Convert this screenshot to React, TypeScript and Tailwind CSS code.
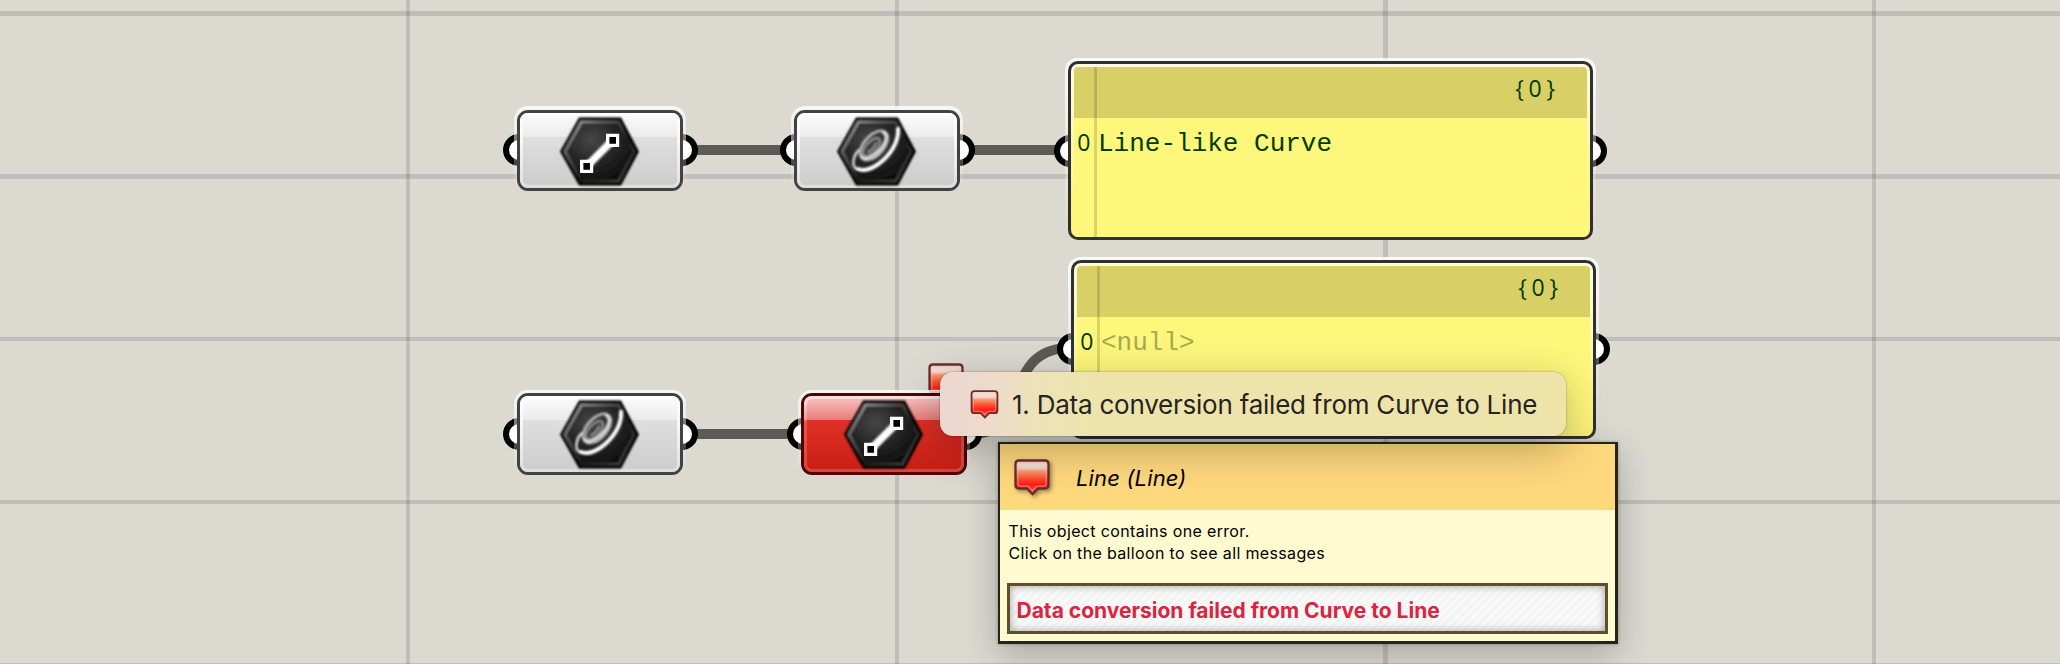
import type { ReactNode } from "react";

const VERTICAL_LINES = [
  "left-[406px] w-[4px]",
  "left-[895px] w-[4px]",
  "left-[1383px] w-[5px]",
  "left-[1872px] w-[4px]",
];
const HORIZONTAL_LINES = [
  "top-[11px] h-[5px]",
  "top-[174px] h-[5px]",
  "top-[337px] h-[4px]",
  "top-[500px] h-[4px]",
  "top-[663px] h-[1px]",
];

function HexBase({ id, children }: { id: string; children: ReactNode }) {
  return (
    <svg viewBox="0 0 79 69" className="h-[69px] w-[79px] overflow-visible">
      <defs>
        <radialGradient id={`${id}-face`} cx="0.38" cy="0.3" r="0.75">
          <stop offset="0" stopColor="#474747" />
          <stop offset="0.5" stopColor="#262626" />
          <stop offset="1" stopColor="#0d0d0d" />
        </radialGradient>
        <linearGradient id={`${id}-rim`} x1="0" y1="0" x2="1" y2="1">
          <stop offset="0" stopColor="#b4b4b4" />
          <stop offset="0.3" stopColor="#5c5c5c" />
          <stop offset="0.6" stopColor="#1c1c1c" />
          <stop offset="1" stopColor="#4a4a4a" />
        </linearGradient>
        <filter id={`${id}-soft`} x="-10%" y="-10%" width="120%" height="120%">
          <feGaussianBlur stdDeviation="0.85" />
        </filter>
      </defs>
      <g filter={`url(#${id}-soft)`}>
        <path d="M0 34.5 L19 0.5 H61 L79 34.5 L61 68.5 H19 Z" fill="#050505" />
        <path
          d="M5 34.5 L21.5 5 H58.5 L74 34.5 L58.5 64 H21.5 Z"
          fill={`url(#${id}-face)`}
          stroke={`url(#${id}-rim)`}
          strokeWidth="2.6"
        />
      </g>
      {children}
    </svg>
  );
}

function LineIcon({ id }: { id: string }) {
  return (
    <HexBase id={id}>
      <path d="M28 48 L52 24" stroke="#fff" strokeWidth="7.5" filter={`url(#${id}-soft)`} />
      <path d="M46 16.7h13.2v13.2H46zM20 42.7h13.2v13.2H20z" fill="#fff" />
      <path d="M49.4 20.1h6.6v6.6h-6.6zM23.4 46.1h6.6v6.6h-6.6z" fill="#000" />
    </HexBase>
  );
}

function CurveIcon({ id }: { id: string }) {
  return (
    <HexBase id={id}>
      <g fill="none" filter={`url(#${id}-soft)`} strokeLinecap="round">
        <path d="M61 11 C63 24 54 39 40 48.5 C30 55 18 55 16.5 47.5 C15.8 42 18 37 22 33" stroke="#d8d8d8" strokeWidth="2.6" />
        <path d="M61 12 C62 25 53 39 40 48 C33 52.5 26 54 21 52" stroke="#ffffff" strokeWidth="4" />
        <ellipse cx="37" cy="28.5" rx="17.5" ry="10" transform="rotate(-48 37 28.5)" stroke="#bcbcbc" strokeWidth="2.5" />
        <path d="M46 15.5 C52 18 48 30 37 38 C31 42 26 42.5 24.5 39" stroke="#e4e4e4" strokeWidth="2.5" />
        <ellipse cx="34.5" cy="30" rx="11" ry="5.3" transform="rotate(-47 34.5 30)" stroke="#959595" strokeWidth="2.2" />
        <path d="M31 35 C35 33 38 29 39 26" stroke="#a0a0a0" strokeWidth="2" />
      </g>
    </HexBase>
  );
}

function Balloon({ id, className }: { id: string; className: string }) {
  return (
    <svg viewBox="0 0 36 37" className={className}>
      <defs>
        <linearGradient id={id} x1="0" y1="0" x2="0" y2="1">
          <stop offset="0" stopColor="#efe3dc" />
          <stop offset="0.22" stopColor="#f6d9cc" />
          <stop offset="0.32" stopColor="#f79a72" />
          <stop offset="0.5" stopColor="#fb5a34" />
          <stop offset="0.72" stopColor="#ff1b16" />
          <stop offset="1" stopColor="#ff6a5c" />
        </linearGradient>
      </defs>
      <path
        d="M5 1.5 H31 Q34.5 1.5 34.5 5 V26 Q34.5 29.5 31 29.5 H24 L18.5 35 L13 29.5 H5 Q1.5 29.5 1.5 26 V5 Q1.5 1.5 5 1.5 Z"
        fill={`url(#${id})`}
        stroke="#6a2c2c"
        strokeWidth="2.3"
      />
      <path
        d="M6 3.8 H30 Q32.2 3.8 32.2 6 V25 Q32.2 27.2 30 27.2 H23 L18.5 31.5 L14 27.2 H6 Q3.8 27.2 3.8 25 V6 Q3.8 3.8 6 3.8 Z"
        fill="none"
        stroke="#ffb9a8"
        strokeOpacity="0.4"
        strokeWidth="1.6"
      />
    </svg>
  );
}

function Grips({ top }: { top: string }) {
  return (
    <>
      <span className={`absolute -left-[14.5px] ${top} size-8 rounded-full border-[6.5px] border-black bg-white`} />
      <span className={`absolute -right-[14.5px] ${top} size-8 rounded-full border-[6.5px] border-black bg-white`} />
    </>
  );
}

function Component({ place, error = false, children }: { place: string; error?: boolean; children: ReactNode }) {
  const frame = error
    ? "border-[#500500] bg-[linear-gradient(180deg,#fbdede_0%,#e8837e_32%,#dc2e24_32.5%,#da2a20_55%,#c92017_100%)]"
    : "border-[#424242] bg-[linear-gradient(180deg,#ffffff_0%,#ececec_32%,#dfdfdf_32.5%,#cccccc_100%)]";
  const glow = error
    ? "bg-[linear-gradient(180deg,#fde5e5_0%,#ee9a98_31%,#e8554e_33%,#d9443b_100%)]"
    : "bg-[linear-gradient(180deg,#ffffff_0%,#f7f7f7_40%,#dedede_100%)]";
  const face = error
    ? "bg-[linear-gradient(180deg,#f7bcbc_0%,#e67d78_30%,#dc3026_30.5%,#d82a20_55%,#c91f16_100%)]"
    : "bg-[linear-gradient(180deg,#fafafa_0%,#ebebeb_30%,#dfdfdf_30.5%,#cdcdcd_100%)]";
  return (
    <div className={`absolute ${place} h-[81.5px] w-[166px]`}>
      <Grips top="top-[24.5px]" />
      <span className="absolute -inset-x-[3px] -top-[3.5px] bottom-0 rounded-[14px] bg-[linear-gradient(180deg,#ffffffd0_0%,#ffffffa8_10%,#ffffff60_55%,#ffffff00_100%)]" />
      <div className={`relative h-full w-full rounded-[11px] border-[3px] ${frame}`}>
        <div className={`h-full w-full rounded-[8px] p-[3px] ${glow}`}>
          <div className={`flex h-full w-full items-center justify-center rounded-[5px] ${face}`}>
            <div className="-ml-[2px] mt-[2px]">{children}</div>
          </div>
        </div>
      </div>
    </div>
  );
}

function Glyph({ children }: { children: string }) {
  return (
    <span className="inline-block w-[15.6px] text-center font-['Open_Sans',sans-serif] text-[23px] font-normal">
      {children}
    </span>
  );
}

function Panel({ place, value, muted = false }: { place: string; value: string; muted?: boolean }) {
  return (
    <div className={`absolute ${place} h-[179px] w-[524.5px] font-['Liberation_Mono',monospace] text-[26px] text-[#003b00]`}>
      <Grips top="top-[73.5px]" />
      <span className="absolute -inset-x-[3px] -top-[3px] bottom-0 rounded-[12px] bg-[linear-gradient(180deg,#ffffffd8_0%,#ffffffa8_25%,#ffffff60_50%,#ffffff00_100%)]" />
      <div className="relative flex h-full w-full flex-col overflow-hidden rounded-[10px] border-[3px] border-[#303030] bg-[linear-gradient(180deg,#fffbe0_0%,#fffac0_30%,#fff67c_80%)] px-[3px] pt-[3px]">
        <div className="flex h-[51px] shrink-0 justify-end rounded-t-[4px] bg-[#d8d066] pr-[28px] leading-[43px]">
          <Glyph>{"{"}</Glyph>
          <Glyph>0</Glyph>
          <Glyph>{"}"}</Glyph>
        </div>
        <div className="flex grow bg-[#fff67c] pt-[10px] leading-[32px]">
          <span className="-mt-[2px] w-[22px] pl-[2px]"><Glyph>0</Glyph></span>
          <span className={muted ? "pl-[2px] text-[#a3ac52]" : "pl-[2px]"}>{value}</span>
        </div>
        <span className="absolute bottom-0 left-[23px] top-[3px] w-[3px] bg-[#000000]/14" />
      </div>
    </div>
  );
}

export default function App() {
  return (
    <main className="relative h-[664px] w-[2060px] overflow-hidden bg-[#dcd9d1]">
      {VERTICAL_LINES.map((line) => (
        <span key={line} className={`absolute inset-y-0 ${line} bg-black/12`} />
      ))}
      {HORIZONTAL_LINES.map((line) => (
        <span key={line} className={`absolute inset-x-0 ${line} bg-black/12`} />
      ))}

      <svg viewBox="0 0 2060 664" className="absolute inset-0 h-[664px] w-[2060px]" fill="none" stroke="#5b5a57" strokeWidth="10">
        <path d="M690 150 H785" />
        <path d="M968 150 H1060" />
        <path d="M690 434 H793" />
        <path d="M975 434 C1030 430 1002 352 1066 348" />
      </svg>

      <Component place="left-[517px] top-[109.5px]"><LineIcon id="line-a" /></Component>
      <Component place="left-[794px] top-[109.5px]"><CurveIcon id="curve-a" /></Component>
      <Component place="left-[517px] top-[393px]"><CurveIcon id="curve-b" /></Component>
      <Balloon id="balloon-node" className="absolute left-[928px] top-[363px] h-[37px] w-[36px]" />
      <Component place="left-[801px] top-[393px]" error><LineIcon id="line-b" /></Component>

      <Panel place="left-[1068px] top-[61px]" value="Line-like Curve" />
      <Panel place="left-[1071px] top-[259.5px]" value="<null>" muted />

      <section className="absolute left-[998px] top-[442px] flex h-[202px] w-[620px] flex-col border-2 border-r-[3px] border-b-[3px] border-[#26251c] bg-[#fffbd0] font-[Inter,sans-serif] text-black shadow-[0_10px_34px_rgba(0,0,0,0.24),0_0_3px_rgba(0,0,0,0.3)]">
        <header className="flex h-[66px] shrink-0 items-center bg-[#fed87d] pl-[14px]">
          <Balloon id="balloon-tip" className="h-[37px] w-[36px] drop-shadow-[2px_2px_2px_rgba(0,0,0,0.4)]" />
          <h1 className="ml-[26px] mt-[3px] text-[22px] italic tracking-[0.15px]">Line (Line)</h1>
        </header>
        <p className="pl-[8.5px] pt-[10px] text-[16px] leading-[22px] tracking-[0.35px]">
          This object contains one error.
          <br />
          Click on the balloon to see all messages
        </p>
        <div className="ml-[7px] mt-[19px] flex h-[51px] w-[601px] items-center border-[3px] border-[#5f5027] bg-[repeating-linear-gradient(135deg,#f9f9f9_0px,#f9f9f9_3px,#f4f4f4_3px,#f4f4f4_6px)] pl-[6.5px] pt-[5px] shadow-[inset_0_0_9px_rgba(0,0,0,0.35)]">
          <strong className="whitespace-nowrap text-[21px] font-bold tracking-[0px] text-[#da2440]">
            Data conversion failed from Curve to Line
          </strong>
        </div>
      </section>

      <div className="absolute left-[940px] top-[372px] flex h-[64px] w-[626px] items-center rounded-[13px] bg-[linear-gradient(90deg,#eed6d0_0px,#eddbcb_55px,#ede2b9_95px,#eee4ab_150px,#eee4aa_100%)] pl-[30px] shadow-[0_12px_44px_rgba(0,0,0,0.28),0_0_2px_rgba(0,0,0,0.45)]">
        <Balloon id="balloon-menu" className="h-[29px] w-[29px] shrink-0" />
        <span className="ml-[13px] mt-px whitespace-nowrap font-[Inter,sans-serif] text-[26px] tracking-[-0.23px] text-[#25241f]">
          1. Data conversion failed from Curve to Line
        </span>
      </div>
    </main>
  );
}
